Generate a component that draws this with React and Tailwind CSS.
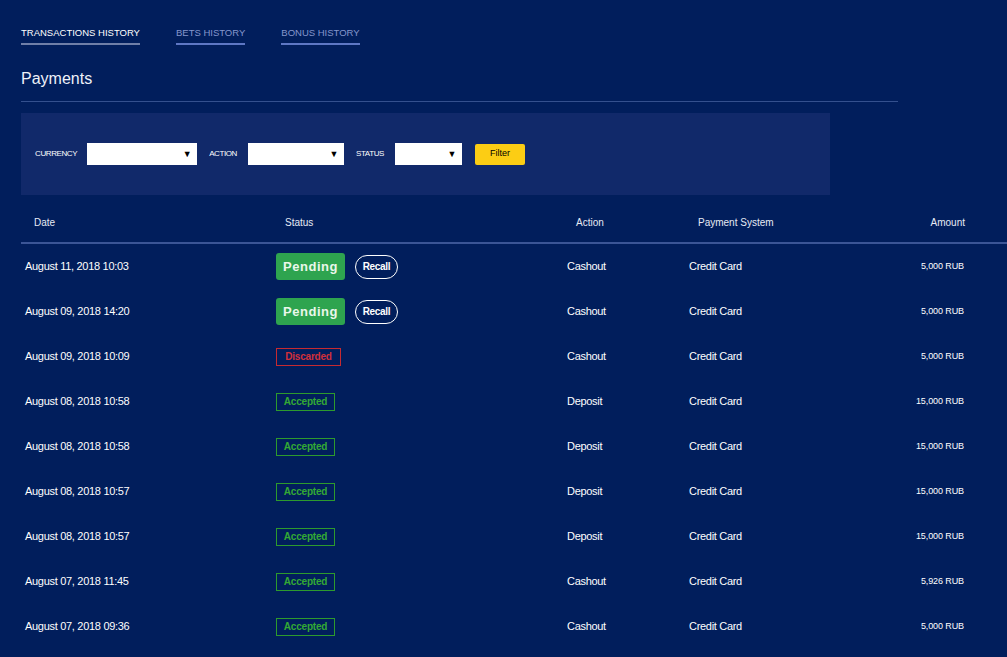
import React from 'react';

const rows = [
  { date: 'August 11, 2018 10:03', status: 'pending', action: 'Cashout', system: 'Credit Card', amount: '5,000 RUB' },
  { date: 'August 09, 2018 14:20', status: 'pending', action: 'Cashout', system: 'Credit Card', amount: '5,000 RUB' },
  { date: 'August 09, 2018 10:09', status: 'discarded', action: 'Cashout', system: 'Credit Card', amount: '5,000 RUB' },
  { date: 'August 08, 2018 10:58', status: 'accepted', action: 'Deposit', system: 'Credit Card', amount: '15,000 RUB' },
  { date: 'August 08, 2018 10:58', status: 'accepted', action: 'Deposit', system: 'Credit Card', amount: '15,000 RUB' },
  { date: 'August 08, 2018 10:57', status: 'accepted', action: 'Deposit', system: 'Credit Card', amount: '15,000 RUB' },
  { date: 'August 08, 2018 10:57', status: 'accepted', action: 'Deposit', system: 'Credit Card', amount: '15,000 RUB' },
  { date: 'August 07, 2018 11:45', status: 'accepted', action: 'Cashout', system: 'Credit Card', amount: '5,926 RUB' },
  { date: 'August 07, 2018 09:36', status: 'accepted', action: 'Cashout', system: 'Credit Card', amount: '5,000 RUB' },
];

const Select = ({ width }) => (
  <div className={`${width} h-[22px] bg-white flex items-center justify-end pr-[6px]`}>
    <span className="text-[9px] text-black leading-none">▼</span>
  </div>
);

const StatusCell = ({ status }) => {
  if (status === 'pending') {
    return (
      <div className="flex items-center gap-[10px]">
        <span className="w-[69px] h-[27px] bg-[#2ea44f] rounded-[3px] text-[#eaf7ea] font-bold text-[13px] tracking-[0.5px] flex items-center justify-center">
          Pending
        </span>
        <span className="w-[43px] h-[24px] border border-white rounded-full text-white font-bold text-[10px] tracking-[-0.3px] flex items-center justify-center">
          Recall
        </span>
      </div>
    );
  }
  if (status === 'discarded') {
    return (
      <span className="w-[65px] h-[18px] border border-[#c62a31] text-[#d0303a] font-bold text-[10px] tracking-[-0.2px] flex items-center justify-center">
        Discarded
      </span>
    );
  }
  return (
    <span className="w-[59px] h-[18px] border border-[#2d9a2d] text-[#34a934] font-bold text-[10px] tracking-[-0.2px] flex items-center justify-center">
      Accepted
    </span>
  );
};

export default function App() {
  return (
    <div className="w-[1007px] h-[657px] overflow-hidden bg-[#011e5c] text-white font-['Liberation_Sans',sans-serif]">
      {/* Tabs */}
      <div className="pl-[21px] pt-[27px] flex gap-[36px] text-[9.5px] leading-[12px]">
        <div className="pb-[4px] border-b-2 border-[#6f7fa8] text-white">TRANSACTIONS HISTORY</div>
        <div className="pb-[4px] border-b-2 border-[#5e77c4] text-[#8596cc]">BETS HISTORY</div>
        <div className="pb-[4px] border-b-2 border-[#5e77c4] text-[#8596cc]">BONUS HISTORY</div>
      </div>

      {/* Heading */}
      <div className="ml-[21px] w-[877px] mt-[24px] pb-[12px] border-b border-[#34508e]">
        <h1 className="text-[16px] leading-[20px] text-[#eef1f8]">Payments</h1>
      </div>

      {/* Filter panel */}
      <div className="ml-[21px] mt-[11px] w-[809px] h-[82px] bg-[#11296a] flex items-center pl-[14px] text-[8px] tracking-[-0.4px] uppercase">
        <span className="mr-[10px]">Currency</span>
        <Select width="w-[110px]" />
        <span className="ml-[12px] mr-[11px]">Action</span>
        <Select width="w-[96px]" />
        <span className="ml-[12px] mr-[11px]">Status</span>
        <Select width="w-[67px]" />
        <button className="ml-[13px] w-[50px] h-[21px] bg-[#fccd14] rounded-[2px] text-black text-[9px] tracking-normal normal-case">
          Filter
        </button>
      </div>

      {/* Table */}
      <div className="ml-[21px]">
        <div className="grid grid-cols-[255px_291px_122px_1fr_120px] h-[49px] items-start pt-[22px] border-b-2 border-[#3b5596] text-[10px] leading-[12px] text-[#e6eaf4]">
          <div className="pl-[13px]">Date</div>
          <div className="pl-[9px]">Status</div>
          <div className="pl-[9px]">Action</div>
          <div className="pl-[9px]">Payment System</div>
          <div className="text-right pr-[42px]">Amount</div>
        </div>
        {rows.map((r, i) => (
          <div key={i} className="grid grid-cols-[255px_291px_122px_1fr_120px] h-[45px] items-center text-[11px] tracking-[-0.3px]">
            <div className="pl-[4px]">{r.date}</div>
            <div><StatusCell status={r.status} /></div>
            <div>{r.action}</div>
            <div>{r.system}</div>
            <div className="text-right pr-[43px] text-[9px] tracking-[-0.1px]">{r.amount}</div>
          </div>
        ))}
      </div>
    </div>
  );
}
